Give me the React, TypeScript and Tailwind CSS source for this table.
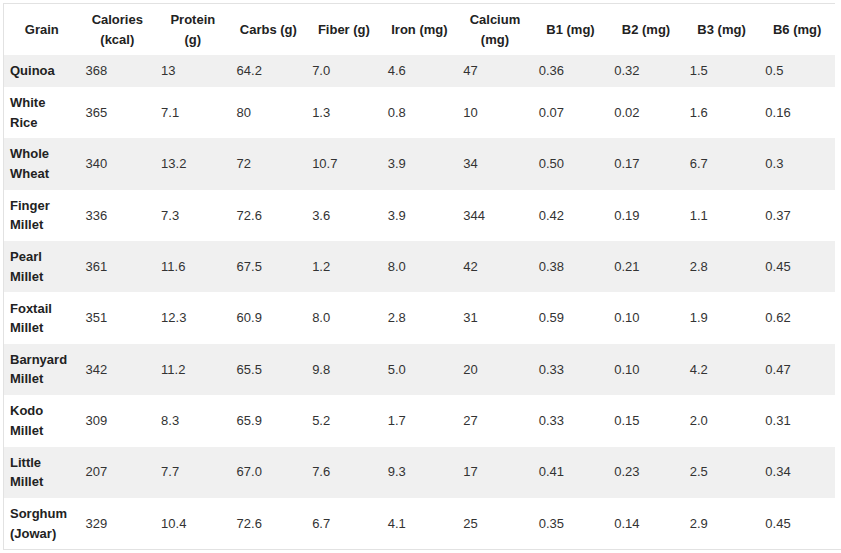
import React from 'react';

type Row = {
  grain: string;
  values: string[];
};

const headers = [
  'Grain',
  'Calories (kcal)',
  'Protein (g)',
  'Carbs (g)',
  'Fiber (g)',
  'Iron (mg)',
  'Calcium (mg)',
  'B1 (mg)',
  'B2 (mg)',
  'B3 (mg)',
  'B6 (mg)',
];

const rows: Row[] = [
  { grain: 'Quinoa', values: ['368', '13', '64.2', '7.0', '4.6', '47', '0.36', '0.32', '1.5', '0.5'] },
  { grain: 'White Rice', values: ['365', '7.1', '80', '1.3', '0.8', '10', '0.07', '0.02', '1.6', '0.16'] },
  { grain: 'Whole Wheat', values: ['340', '13.2', '72', '10.7', '3.9', '34', '0.50', '0.17', '6.7', '0.3'] },
  { grain: 'Finger Millet', values: ['336', '7.3', '72.6', '3.6', '3.9', '344', '0.42', '0.19', '1.1', '0.37'] },
  { grain: 'Pearl Millet', values: ['361', '11.6', '67.5', '1.2', '8.0', '42', '0.38', '0.21', '2.8', '0.45'] },
  { grain: 'Foxtail Millet', values: ['351', '12.3', '60.9', '8.0', '2.8', '31', '0.59', '0.10', '1.9', '0.62'] },
  { grain: 'Barnyard Millet', values: ['342', '11.2', '65.5', '9.8', '5.0', '20', '0.33', '0.10', '4.2', '0.47'] },
  { grain: 'Kodo Millet', values: ['309', '8.3', '65.9', '5.2', '1.7', '27', '0.33', '0.15', '2.0', '0.31'] },
  { grain: 'Little Millet', values: ['207', '7.7', '67.0', '7.6', '9.3', '17', '0.41', '0.23', '2.5', '0.34'] },
  { grain: 'Sorghum (Jowar)', values: ['329', '10.4', '72.6', '6.7', '4.1', '25', '0.35', '0.14', '2.9', '0.45'] },
];

export default function App() {
  return (
    <div className="min-h-screen bg-white pt-[3px] font-['Liberation_Sans',Arial,sans-serif] text-[13px] leading-[19.5px]">
      <div className="ml-[3px] w-[838px] border-b border-l border-[#e2e2e2]">
        <table className="w-[831px] table-fixed border-collapse border-t border-[#e2e2e2]">
          <thead>
            <tr>
              {headers.map((h) => (
                <th
                  key={h}
                  className="px-[6px] py-[6px] text-center align-middle font-bold text-[#222]"
                >
                  {h}
                </th>
              ))}
            </tr>
          </thead>
          <tbody>
            {rows.map((r, i) => (
              <tr key={r.grain} className={i % 2 === 0 ? 'bg-[#f0f0f0]' : 'bg-white'}>
                <td className="px-[6px] py-[6.2px] text-left align-middle font-bold text-[#222]">
                  {r.grain}
                </td>
                {r.values.map((v, j) => (
                  <td key={j} className="px-[6px] py-[6.2px] text-left align-middle text-[#333]">
                    {v}
                  </td>
                ))}
              </tr>
            ))}
          </tbody>
        </table>
      </div>
    </div>
  );
}
